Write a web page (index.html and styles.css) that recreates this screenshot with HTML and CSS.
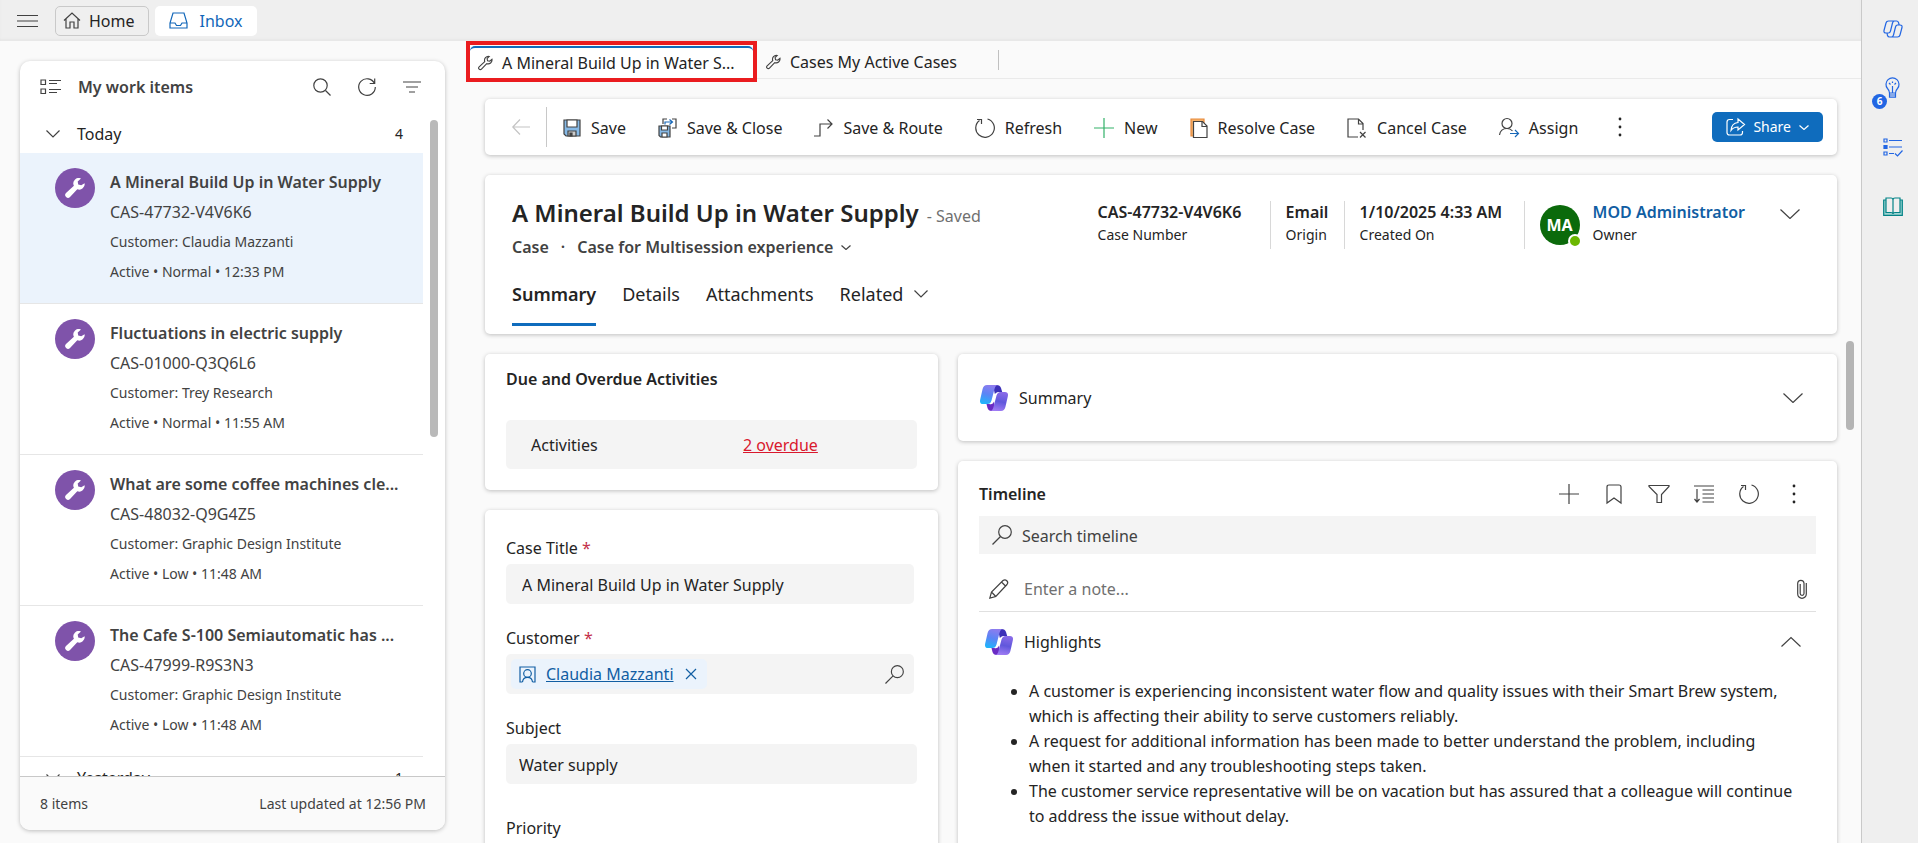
FILE: index.html
```html
<!DOCTYPE html>
<html lang="en">
<head>
<meta charset="utf-8">
<title>Inbox - A Mineral Build Up in Water Supply</title>
<link rel="stylesheet" href="styles.css">
</head>
<body>
<svg class="defs" aria-hidden="true">
  <defs>
    <linearGradient id="cp-a" x1="0.6" y1="0" x2="0.3" y2="1"><stop offset="0" stop-color="#8f7cee"/><stop offset="0.5" stop-color="#5b84f5"/><stop offset="1" stop-color="#1fb4fb"/></linearGradient>
    <linearGradient id="cp-b" x1="0.6" y1="0" x2="0.4" y2="1"><stop offset="0" stop-color="#8a6be8"/><stop offset="0.5" stop-color="#6057dc"/><stop offset="1" stop-color="#a07cf4"/></linearGradient>
    <symbol id="copilot" viewBox="0 0 28 26">
      <path d="M13 0h3.500q3.500 0 4.500 3l1.200 4H18q-2 0-3 3z" fill="#3c30b8"/>
      <path d="M15 26h-3.500q-3 0-4-3L6.500 19H11q2 0 3-3z" fill="#6a2bc4"/>
      <path d="M7 0h11q-2.500 0-3.500 4l-3 11.500q-1 3.500-4 3.500H3Q-.8 19 .2 14.500L2.600 4Q3.600 0 7 0z" fill="url(#cp-a)"/>
      <path d="M21 26H10q2.500 0 3.500-4l3-11.500Q17.500 7 20.500 7H25q3.800 0 2.800 4.500L25.400 22q-1 4-4.400 4z" fill="url(#cp-b)"/>
      <path d="M15 8.500h2.500q-1.500.7-2 2.500l-1.800 6q-.8 2-2.700 2.200H9.500q1.700-.6 2.300-2.700l1.700-6q.5-1.500 1.500-2z" fill="#fff"/>
    </symbol>
    <symbol id="wrench-solid" viewBox="0 0 20 20">
      <path d="M19.600 5.200a5.400 5.400 0 0 1-7.300 6L5 18.900a2.700 2.700 0 0 1-4-3.800l7.900-7.300A5.400 5.400 0 0 1 16 .5l-3.300 3.100.5 3 3 .6z" fill="#fff"/>
    </symbol>
    <symbol id="wrench" viewBox="0 0 16 16">
      <path d="M14.900 4a4.200 4.200 0 0 1-5.600 4.700l-5.600 5.800a1.700 1.700 0 0 1-2.500-2.400l6-5.600A4.200 4.200 0 0 1 12 1L9.700 3.400l.5 2.200 2.300.4z"/>
    </symbol>
    <symbol id="down" viewBox="0 0 20 10"><path d="M.5.500 10 9.500 19.500.5"/></symbol>
    <symbol id="down-mid" viewBox="0 0 14 8"><path d="M.5.500 7 7 13.500.5"/></symbol>
    <symbol id="down-small" viewBox="0 0 10 5"><path d="M.5.500 5 4.500 9.500.5"/></symbol>
    <symbol id="refresh" viewBox="0 0 20 20"><path d="M12.500 1A9.300 9.300 0 1 1 4.500 2.500M2 1.500h4.500V6"/></symbol>
    <symbol id="search-left" viewBox="0 0 20 20"><circle cx="13" cy="7" r="6.300"/><path d="M8.500 11.500.5 19.500"/></symbol>
  </defs>
</svg>

<div class="app">
  <div class="workspace">
    <header class="topbar">
      <button class="icon-btn menu" aria-label="Menu"><svg width="21" height="12" viewBox="0 0 21 12"><path d="M0 .5h21M0 6h21M0 11.500h21"/></svg></button>
      <button class="session home"><svg width="18" height="17" viewBox="0 0 18 17"><path d="M1 8.500 9 1l8 7.500M3 7v9h4v-6h4v6h4V7"/></svg>Home</button>
      <button class="session inbox"><svg width="19" height="17" viewBox="0 0 19 17"><path d="M4 1h11l3 10v5H1v-5zM1 11h5l1.500 2.500h4L13 11h5"/></svg>Inbox</button>
    </header>

    <div class="body">
      <aside class="side">
        <div class="side-head">
          <svg width="21" height="16" viewBox="0 0 21 16"><path d="M1 1h4.500v4.500H1zM1 10h4.500v4.500H1zM9 1.500h12M9 4.500h8M9 10.500h12M9 13.500h8"/></svg>
          <h2>My work items</h2>
          <button class="icon-btn" aria-label="Search"><svg width="18" height="18" viewBox="0 0 18 18"><circle cx="7.500" cy="7.500" r="6.700"/><path d="m12.500 12.500 5 5"/></svg></button>
          <button class="icon-btn" aria-label="Refresh"><svg width="18" height="18" viewBox="0 0 18 18"><path d="M16.500 5.500A8.300 8.300 0 1 0 17.300 9M16.700.5v5h-5"/></svg></button>
          <button class="icon-btn" aria-label="Filter"><svg width="18" height="12" viewBox="0 0 18 12"><path d="M0 1h18M3 6h12M6 11h6"/></svg></button>
        </div>
        <div class="list-wrap">
          <div class="list">
            <button class="group"><svg width="14" height="8"><use href="#down-mid"/></svg><span>Today</span><span class="count">4</span></button>
            <article class="item selected"><span class="badge"><svg width="20" height="20"><use href="#wrench-solid"/></svg></span>
              <div><h3>A Mineral Build Up in Water Supply</h3><p class="cas">CAS-47732-V4V6K6</p><p>Customer: Claudia Mazzanti</p><p>Active • Normal • 12:33 PM</p></div></article>
            <article class="item"><span class="badge"><svg width="20" height="20"><use href="#wrench-solid"/></svg></span>
              <div><h3>Fluctuations in electric supply</h3><p class="cas">CAS-01000-Q3Q6L6</p><p>Customer: Trey Research</p><p>Active • Normal • 11:55 AM</p></div></article>
            <article class="item"><span class="badge"><svg width="20" height="20"><use href="#wrench-solid"/></svg></span>
              <div><h3>What are some coffee machines cle...</h3><p class="cas">CAS-48032-Q9G4Z5</p><p>Customer: Graphic Design Institute</p><p>Active • Low • 11:48 AM</p></div></article>
            <article class="item"><span class="badge"><svg width="20" height="20"><use href="#wrench-solid"/></svg></span>
              <div><h3>The Cafe S-100 Semiautomatic has ...</h3><p class="cas">CAS-47999-R9S3N3</p><p>Customer: Graphic Design Institute</p><p>Active • Low • 11:48 AM</p></div></article>
            <button class="group"><svg width="14" height="8"><use href="#down-mid"/></svg><span>Yesterday</span><span class="count">1</span></button>
          </div>
          <div class="side-thumb"></div>
        </div>
        <footer class="side-foot"><span>8 items</span><span>Last updated at 12:56 PM</span></footer>
      </aside>

      <main class="main">
        <nav class="tabs">
          <button class="tab active"><svg width="15" height="16"><use href="#wrench"/></svg><span>A Mineral Build Up in Water S...</span></button>
          <button class="tab"><svg width="15" height="16"><use href="#wrench"/></svg>Cases My Active Cases</button>
          <span class="tab-sep"></span>
        </nav>

        <div class="page">
          <div class="content">
            <div class="card toolbar">
              <button class="back" aria-label="Back"><svg width="18" height="16" viewBox="0 0 18 16"><path d="M8 .5.800 8 8 15.500M1 8h17"/></svg></button>
              <div class="commands">
                <button><svg width="18" height="18" viewBox="0 0 18 18"><path d="M1 1h16v16H3l-2-2z" fill="#86b9e6"/><path d="M4 1h10v7H4z" fill="#fff"/><path d="M5 17v-5h8v5z" fill="#ccc"/><path d="M7 14h2v3H7z" fill="#444"/></svg>Save</button>
                <button><svg width="19" height="20" viewBox="0 0 19 20"><path d="M1 8h11v11H2.500L1 17.500z" fill="#86b9e6"/><path d="M3.500 8h6v4h-6zM4 19v-4h5v4z" fill="#fff"/><path d="M5 6V1h4M14 1h4v9h-4"/><path class="blue" d="M7 6.500V4h7M11.500 1.500 14.500 4l-3 2.500"/></svg>Save &amp; Close</button>
                <button><svg width="19" height="18" viewBox="0 0 19 18"><path d="M0 17h6V5h12M13.500.500 18 5l-4.500 4.500"/></svg>Save &amp; Route</button>
                <button><svg width="20" height="20"><use href="#refresh"/></svg>Refresh</button>
                <button><svg class="green" width="20" height="20" viewBox="0 0 20 20"><path d="M10 0v20M0 10h20"/></svg>New</button>
                <button><svg width="18" height="20" viewBox="0 0 18 20"><path d="M1 1h13v17H1z" fill="#f6b26b" stroke="#e8893b"/><path d="M3.500 3.500h9L17 8v11.500H3.500z" fill="#fff"/><path d="M12 3.500V8.500h5"/></svg>Resolve Case</button>
                <button><svg width="20" height="20" viewBox="0 0 20 20"><path d="M11 19H1V1h10.500L16 5.500V12M11.500 1v5H16M13 14l5.500 5.500M18.500 14 13 19.500"/></svg>Cancel Case</button>
                <button><svg width="20" height="20" viewBox="0 0 20 20"><circle cx="8" cy="5.500" r="5"/><path d="M.5 17Q1.500 10.500 8 10.500q3.500 0 5.500 2.500"/><path class="blue" d="M11 15.500h8M16 12l3.500 3.500L16 19"/></svg>Assign</button>
              </div>
              <button class="icon-btn more" aria-label="More commands"><svg class="dots" width="4" height="20" viewBox="0 0 4 20"><circle cx="2" cy="2" r="1.400"/><circle cx="2" cy="10" r="1.400"/><circle cx="2" cy="18" r="1.400"/></svg></button>
              <button class="share"><svg width="19" height="18" viewBox="0 0 19 18"><path d="M7 1.500H3.500Q1 1.500 1 4v10.500Q1 17 3.500 17H14q2.500 0 2.500-2.500V13"/><path d="M12 1l6.500 5.500L12 12V9Q7.500 9 5 12.500 5.500 5 12 4.500z"/></svg>Share<svg width="10" height="5"><use href="#down-small"/></svg></button>
            </div>

            <section class="card record">
              <div class="record-top">
                <div class="record-id">
                  <div class="title-row"><h1>A Mineral Build Up in Water Supply</h1><span>- Saved</span></div>
                  <div class="form-row"><span>Case</span><span>·</span><button>Case for Multisession experience<svg width="10" height="5"><use href="#down-small"/></svg></button></div>
                </div>
                <dl class="facts">
                  <div><dd>CAS-47732-V4V6K6</dd><dt>Case Number</dt></div>
                  <div><dd>Email</dd><dt>Origin</dt></div>
                  <div><dd>1/10/2025 4:33 AM</dd><dt>Created On</dt></div>
                  <div class="owner"><span class="avatar">MA<i></i></span><span><dd><a href="#owner">MOD Administrator</a></dd><dt>Owner</dt></span></div>
                </dl>
                <button class="icon-btn expand" aria-label="Expand header"><svg width="20" height="10"><use href="#down"/></svg></button>
              </div>
              <nav class="form-tabs">
                <button class="current">Summary</button><button>Details</button><button>Attachments</button><button>Related<svg width="14" height="8"><use href="#down-mid"/></svg></button>
              </nav>
            </section>

            <div class="columns">
              <div class="column">
                <section class="card due">
                  <h2>Due and Overdue Activities</h2>
                  <div class="due-row"><span>Activities</span><a href="#overdue">2 overdue</a></div>
                </section>
                <section class="card form">
                  <div class="field"><label for="title">Case Title <b>*</b></label><input id="title" value="A Mineral Build Up in Water Supply"></div>
                  <div class="field"><label for="customer">Customer <b>*</b></label>
                    <div class="lookup">
                      <span class="chip"><svg width="17" height="17" viewBox="0 0 17 17"><path d="M3.500 16H1V1h15v15h-2.500"/><circle cx="8.500" cy="7.500" r="3.800"/><path d="M3.500 16q.5-4.700 5-4.700t5 4.700"/></svg><a href="#customer">Claudia Mazzanti</a><button aria-label="Remove"><svg width="10" height="10" viewBox="0 0 10 10"><path d="m0 0 10 10M10 0 0 10"/></svg></button></span>
                      <input id="customer">
                      <button class="icon-btn" aria-label="Look up customer"><svg width="19" height="19"><use href="#search-left"/></svg></button>
                    </div></div>
                  <div class="field wide"><label for="subject">Subject</label><input id="subject" value="Water supply"></div>
                  <div class="field"><label for="priority">Priority</label><input id="priority" value="Normal"></div>
                </section>
              </div>

              <div class="column">
                <section class="card ai"><svg class="logo" width="28" height="26"><use href="#copilot"/></svg><span>Summary</span><button class="icon-btn" aria-label="Expand summary"><svg width="20" height="10"><use href="#down"/></svg></button></section>
                <section class="card timeline">
                  <div class="tl-head"><h2>Timeline</h2>
                    <button class="icon-btn" aria-label="Add"><svg width="20" height="20" viewBox="0 0 20 20"><path d="M10 0v20M0 10h20"/></svg></button>
                    <button class="icon-btn" aria-label="Bookmark"><svg width="16" height="20" viewBox="0 0 16 20"><path d="M1 19V3Q1 1 3 1h10q2 0 2 2v16l-7-5z"/></svg></button>
                    <button class="icon-btn" aria-label="Filter"><svg width="20" height="18" viewBox="0 0 20 18"><path d="M0 .5h20v1L12.500 9.500V17.500H8V9.500L0 1.500z"/></svg></button>
                    <button class="icon-btn" aria-label="Sort"><svg width="20" height="18" viewBox="0 0 20 18"><path d="M0 1h20M8.500 5H20M8.500 9H20M8.500 13H20M8.500 17H20M3 4v13M.5 14 3 17l2.500-3"/></svg></button>
                    <button class="icon-btn" aria-label="Refresh timeline"><svg width="20" height="20"><use href="#refresh"/></svg></button>
                    <button class="icon-btn" aria-label="More"><svg class="dots" width="4" height="20" viewBox="0 0 4 20"><circle cx="2" cy="2" r="1.400"/><circle cx="2" cy="10" r="1.400"/><circle cx="2" cy="18" r="1.400"/></svg></button>
                  </div>
                  <label class="tl-search"><svg width="20" height="20"><use href="#search-left"/></svg><input aria-label="Search timeline" placeholder="Search timeline"></label>
                  <label class="tl-note"><svg width="20" height="20" viewBox="0 0 20 20"><path d="M.8 19.200 2.500 13 14 1.500q2-1.500 3.800.2t.2 3.800L6.800 17.500zM2.500 13l4.300 4.500M12.500 3 17 7.500"/></svg><input aria-label="Enter a note" placeholder="Enter a note..."><svg width="10" height="20" viewBox="0 0 10 20"><path d="M9.300 4v11a4.300 4.300 0 0 1-8.600 0V4a3.200 3.200 0 0 1 6.300 0v10.500a1.900 1.900 0 0 1-3.800 0V5"/></svg></label>
                  <div class="hl-head"><svg class="logo" width="28" height="26"><use href="#copilot"/></svg><span>Highlights</span><button class="icon-btn" aria-label="Collapse highlights"><svg width="20" height="10" viewBox="0 0 20 10"><path d="M.5 9.500 10 .5l9.500 9"/></svg></button></div>
                  <ul>
                    <li>A customer is experiencing inconsistent water flow and quality issues with their Smart Brew system, which is affecting their ability to serve customers reliably.</li>
                    <li>A request for additional information has been made to better understand the problem, including when it started and any troubleshooting steps taken.</li>
                    <li>The customer service representative will be on vacation but has assured that a colleague will continue to address the issue without delay.</li>
                  </ul>
                </section>
              </div>
            </div>
          </div>
          <div class="page-scroll"><div class="page-thumb"></div></div>
        </div>
      </main>
    </div>
  </div>

  <aside class="rail">
    <button class="icon-btn" aria-label="Copilot"><svg width="20" height="18" viewBox="0 0 20 18"><path d="M5.500 1h8q1.500 0 2 1.500l.7 2.500M6 13H3Q.5 13 1 10.500L3 3Q3.500 1 5.500 1M14.500 17h-8Q5 17 4.500 15.500L4 13M14 5h3q2.500 0 2 2.500L17 15q-.5 2-2.500 2M11.500 1Q10 1 9.500 3L7.500 11Q7 13 5.500 13M8.500 17q1.500 0 2-2l2-8q.500-2 2-2"/></svg></button>
    <button class="icon-btn bulb" aria-label="Suggestions, 6 new"><svg width="15" height="20" viewBox="0 0 15 20"><path d="M4.500 15Q4.500 12.500 2.500 10.500a6.500 6.500 0 1 1 10 0Q10.500 12.500 10.500 15zM4.500 15v4.200h6V15M4.500 17h6M7.500 15V8M4 5l1.500 1.500M11 5 9.500 6.500M7.500 3.500v1.500"/></svg><span>6</span></button>
    <button class="icon-btn" aria-label="Agent script"><svg width="20" height="19" viewBox="0 0 20 19"><path d="M1 1h3v3H1zM1 14h3v3H1zM6 2.500h13M6 9h13M6 15.500h5M12 15.500l2.500 2.500 5-5.500"/><path d="M1 7.500h3v3H1z" fill="#2266e3"/></svg></button>
    <button class="icon-btn teal" aria-label="Knowledge search"><svg width="20" height="19" viewBox="0 0 20 19"><path d="M3 3H.700v15.300h18.600V3H17" fill="#9fd5d2"/><path d="M3 1h5q2 0 2 2 0-2 2-2h5v14.500h-5q-2 0-2 1.500 0-1.500-2-1.500H3zM10 3v14" fill="#efefef"/></svg></button>
  </aside>
</div>
</body>
</html>
```
FILE: styles.css
```css
* { box-sizing: border-box; }
body {
  margin: 0;
  height: 100vh;
  overflow: hidden;
  background: #fafafa;
  color: #242424;
  font: 16px/24px "Noto Sans", "Open Sans", sans-serif;
}
h1, h2, h3, p, dl, dd, ul { margin: 0; }
button {
  padding: 0;
  border: 0;
  background: none;
  color: inherit;
  font: inherit;
  text-align: left;
  white-space: nowrap;
}
input {
  min-width: 0;
  border: 0;
  outline: 0;
  background: none;
  color: inherit;
  font: inherit;
}
svg { flex: none; fill: none; stroke: #424242; stroke-width: 1.2; overflow: visible; }
.defs { position: absolute; width: 0; height: 0; }
.logo { stroke: none; }
.dots { fill: #242424; stroke: none; }
.blue { stroke: #1868b8; }
.green { stroke: #32b169; }
.icon-btn { display: flex; align-items: center; justify-content: center; }

.app { display: flex; height: 100%; }
.workspace { flex: 1; min-width: 0; display: flex; flex-direction: column; }

/* Session bar */
.topbar {
  display: flex;
  align-items: center;
  gap: 6px;
  height: 41px;
  padding: 0 17px;
  background: #efefef;
  box-shadow: inset 0 -2px 2px #e7e7e7;
}
.menu { margin-right: 11px; }
.session { display: flex; align-items: center; height: 30px; border-radius: 5px; }
.home { gap: 8px; padding: 0 13px 0 7px; border: 1px solid #c9c9c9; }
.inbox { gap: 12px; padding: 0 14px; background: #fff; color: #1267b9; }
.inbox svg { stroke: #1267b9; }

.body { flex: 1; min-height: 0; display: flex; }

/* Work item list */
.side {
  display: flex;
  flex-direction: column;
  width: 425px;
  margin: 20px 21px 13px 20px;
  border-radius: 10px;
  background: #fff;
  color: #424242;
  box-shadow: 0 1px 4px rgba(0, 0, 0, 0.25);
  overflow: hidden;
}
.side-head { display: flex; align-items: center; gap: 17px; height: 52px; padding: 0 19px 0 20px; }
.side-head h2 { flex: 1; font-size: 16px; font-weight: 600; }
.side-head .icon-btn { width: 28px; }
.list-wrap { flex: 1; min-height: 0; display: flex; }
.list { flex: 1; min-width: 0; overflow: hidden; }
.side-thumb { width: 8px; height: 317px; margin: 7px 7px 0; border-radius: 4px; background: #b9b9b9; }
.group { display: flex; align-items: center; width: 100%; height: 40px; padding: 2px 20px 0 26px; color: #242424; }
.group span { margin-left: 17px; }
.group .count { margin-left: auto; font-size: 14px; }
.item { display: flex; gap: 15px; padding: 14px 15px 16px 35px; border-bottom: 1px solid #e6e6e6; }
.item.selected { background: #ebf3fc; }
.item h3 { font-size: 16px; font-weight: 600; line-height: 30px; white-space: nowrap; }
.item p { font-size: 14px; line-height: 30px; }
.item .cas { font-size: 16px; }
.badge {
  flex: none;
  display: grid;
  place-items: center;
  width: 40px;
  height: 40px;
  margin-top: 1px;
  border-radius: 50%;
  background: #7f53aa;
}
.badge svg { stroke: none; }
.side-foot {
  display: flex;
  align-items: center;
  justify-content: space-between;
  height: 54px;
  padding: 0 19px 0 20px;
  border-top: 1px solid #c8c8c8;
  background: #fafafa;
  font-size: 14px;
}

/* Page tabs */
.main { flex: 1; min-width: 0; display: flex; flex-direction: column; }
.tabs { display: flex; height: 38px; padding: 5px 0 0 4px; border-bottom: 1px solid #eaeaea; }
.tab { display: flex; align-items: center; gap: 9px; padding: 0 13px; }
.tab.active {
  position: relative;
  width: 283px;
  padding: 0 8px;
  border-top: 2px solid #0f6cbd;
  border-radius: 5px 5px 0 0;
  background: #fff;
}
.tab.active::after {
  content: "";
  position: absolute;
  inset: -7px -4px -4px;
  border: 4px solid #ea1c1f;
}
.tab-sep { width: 1px; height: 20px; margin: 4px 0 0 28px; background: #c0c0c0; }

.page { flex: 1; min-height: 0; display: flex; padding-left: 19px; overflow: hidden; }
.content { flex: 1; min-width: 0; padding: 20px 0 0; display: flex; flex-direction: column; gap: 20px; }
.page-scroll { width: 24px; padding: 262px 0 0 9px; }
.page-thumb { width: 8px; height: 89px; border-radius: 4px; background: #b5b5b5; }
.card { flex: none; border-radius: 5px; background: #fff; box-shadow: 0 1px 4px rgba(0, 0, 0, 0.24); }

/* Command bar */
.toolbar { display: flex; align-items: center; height: 56px; padding: 0 14px 0 27px; }
.back { display: flex; align-items: center; height: 40px; padding-right: 16px; border-right: 1px solid #c8c8c8; }
.back svg { stroke: #c4c4c4; }
.commands { display: flex; gap: 32px; margin-left: 16px; }
.commands button { display: flex; align-items: center; gap: 10px; padding-top: 1px; }
.more { margin-left: 40px; }
.share {
  display: flex;
  align-items: center;
  gap: 8px;
  height: 30px;
  margin-left: auto;
  padding: 0 14px;
  border-radius: 5px;
  background: #0f6cbd;
  color: #fff;
  font-size: 14px;
}
.share svg { stroke: #fff; }

/* Record header */
.record { padding: 22px 37px 0 27px; }
.record-top { display: flex; align-items: flex-start; }
.record-id { flex: 1; }
.title-row { display: flex; align-items: baseline; gap: 8px; white-space: nowrap; }
h1 { font-size: 24px; font-weight: 600; line-height: 32px; }
.title-row span { color: #707070; }
.form-row { display: flex; gap: 12px; padding-top: 2px; line-height: 32px; font-weight: 600; color: #424242; }
.form-row button { display: flex; align-items: center; gap: 8px; }
.facts { display: grid; grid-template-columns: 188px 74px 180px auto; margin-top: 4px; white-space: nowrap; }
.facts > div { height: 48px; padding: 0 15px; border-right: 1px solid #d8d8d8; }
.facts dd { font-weight: 600; line-height: 22px; }
.facts dt { font-size: 14px; line-height: 24px; }
.facts > .owner { display: flex; gap: 13px; border: 0; padding-right: 0; }
.owner a { color: #115ea3; text-decoration: none; }
.avatar {
  position: relative;
  display: grid;
  place-items: center;
  width: 40px;
  height: 40px;
  margin-top: 4px;
  border-radius: 50%;
  background: #0b6a0b;
  color: #fff;
  font-weight: 700;
}
.avatar i {
  position: absolute;
  right: -2px;
  bottom: -3px;
  width: 14px;
  height: 14px;
  border: 2px solid #fff;
  border-radius: 50%;
  background: #6bb700;
}
.expand { margin: 12px 0 0 35px; }
.form-tabs { display: flex; gap: 26px; margin-top: 9px; padding-bottom: 8px; }
.form-tabs button { display: flex; align-items: center; gap: 11px; height: 54px; padding-bottom: 7px; font-size: 18px; border-bottom: 3px solid transparent; }
.form-tabs .current { font-weight: 600; border-color: #0f6cbd; }

/* Form columns */
.columns { display: grid; grid-template-columns: 453fr 879fr; gap: 20px; }
.column { display: flex; flex-direction: column; gap: 20px; min-width: 0; }
.card h2 { font-size: 16px; font-weight: 600; }
.due { padding: 13px 21px 21px; }
.due-row {
  display: grid;
  grid-template-columns: 212px 1fr;
  align-items: center;
  height: 49px;
  margin-top: 29px;
  padding: 1px 25px 0;
  border-radius: 5px;
  background: #f4f4f4;
}
.due-row a { color: #d9182d; }
.form { padding: 24px 24px 0 21px; }
.field { display: flex; flex-direction: column; margin-bottom: 20px; }
.field label { height: 30px; line-height: 28px; }
.field b { color: #c4314b; font-weight: 400; }
.field > input, .lookup { height: 40px; padding: 1px 16px 0; border-radius: 5px; background: #f4f4f4; }
.field.wide { margin: 0 -3px 30px 0; }
.field.wide input { padding: 1px 13px 0; }
.lookup { display: flex; align-items: center; padding: 0 10px 0 5px; }
.lookup input { flex: 1; }
.chip { display: flex; align-items: center; height: 30px; padding: 0 11px 0 8px; border-radius: 5px; background: #ebf3fc; }
.chip a { margin: 0 12px 0 10px; color: #115ea3; }
.chip button { display: flex; }
.chip svg { stroke: #115ea3; }

/* Copilot summary and timeline */
.ai { display: flex; align-items: center; gap: 11px; height: 87px; padding: 0 34px 0 22px; }
.ai .icon-btn { margin-left: auto; }
.timeline { padding: 15px 21px 30px; }
.tl-head { display: flex; align-items: center; height: 35px; margin-bottom: 5px; }
.tl-head h2 { flex: 1; line-height: 24px; }
.tl-head .icon-btn { width: 45px; height: 26px; }
.tl-search { display: flex; align-items: center; gap: 10px; height: 38px; padding: 0 13px; background: #f4f4f4; }
.tl-search input, .tl-note input { flex: 1; padding: 1px 0 0; }
.tl-search input::placeholder { color: #424242; opacity: 1; }
.tl-note { display: flex; align-items: center; gap: 15px; height: 58px; padding: 12px 9px 0 10px; border-bottom: 1px solid #e0e0e0; }
.tl-note input::placeholder { color: #707070; opacity: 1; }
.hl-head { display: flex; align-items: center; gap: 11px; height: 60px; padding: 0 15px 0 6px; }
.hl-head .icon-btn { margin-left: auto; }
.timeline ul { margin-top: 7px; padding: 0 20px 0 50px; line-height: 25px; }

/* Productivity rail */
.rail {
  width: 57px;
  padding: 19px 0 0 5px;
  border-left: 1px solid #c9c9c9;
  background: #efefef;
  display: flex;
  flex-direction: column;
  align-items: center;
  gap: 39px;
}
.rail .icon-btn { height: 20px; }
.rail svg { stroke: #2266e3; }
.rail .teal svg { stroke: #038387; }
.bulb { position: relative; }
.bulb span {
  position: absolute;
  left: -13px;
  top: 16px;
  width: 15px;
  height: 15px;
  border-radius: 50%;
  background: #2266e3;
  color: #fff;
  font-size: 10px;
  font-weight: 700;
  line-height: 15px;
  text-align: center;
}
```
